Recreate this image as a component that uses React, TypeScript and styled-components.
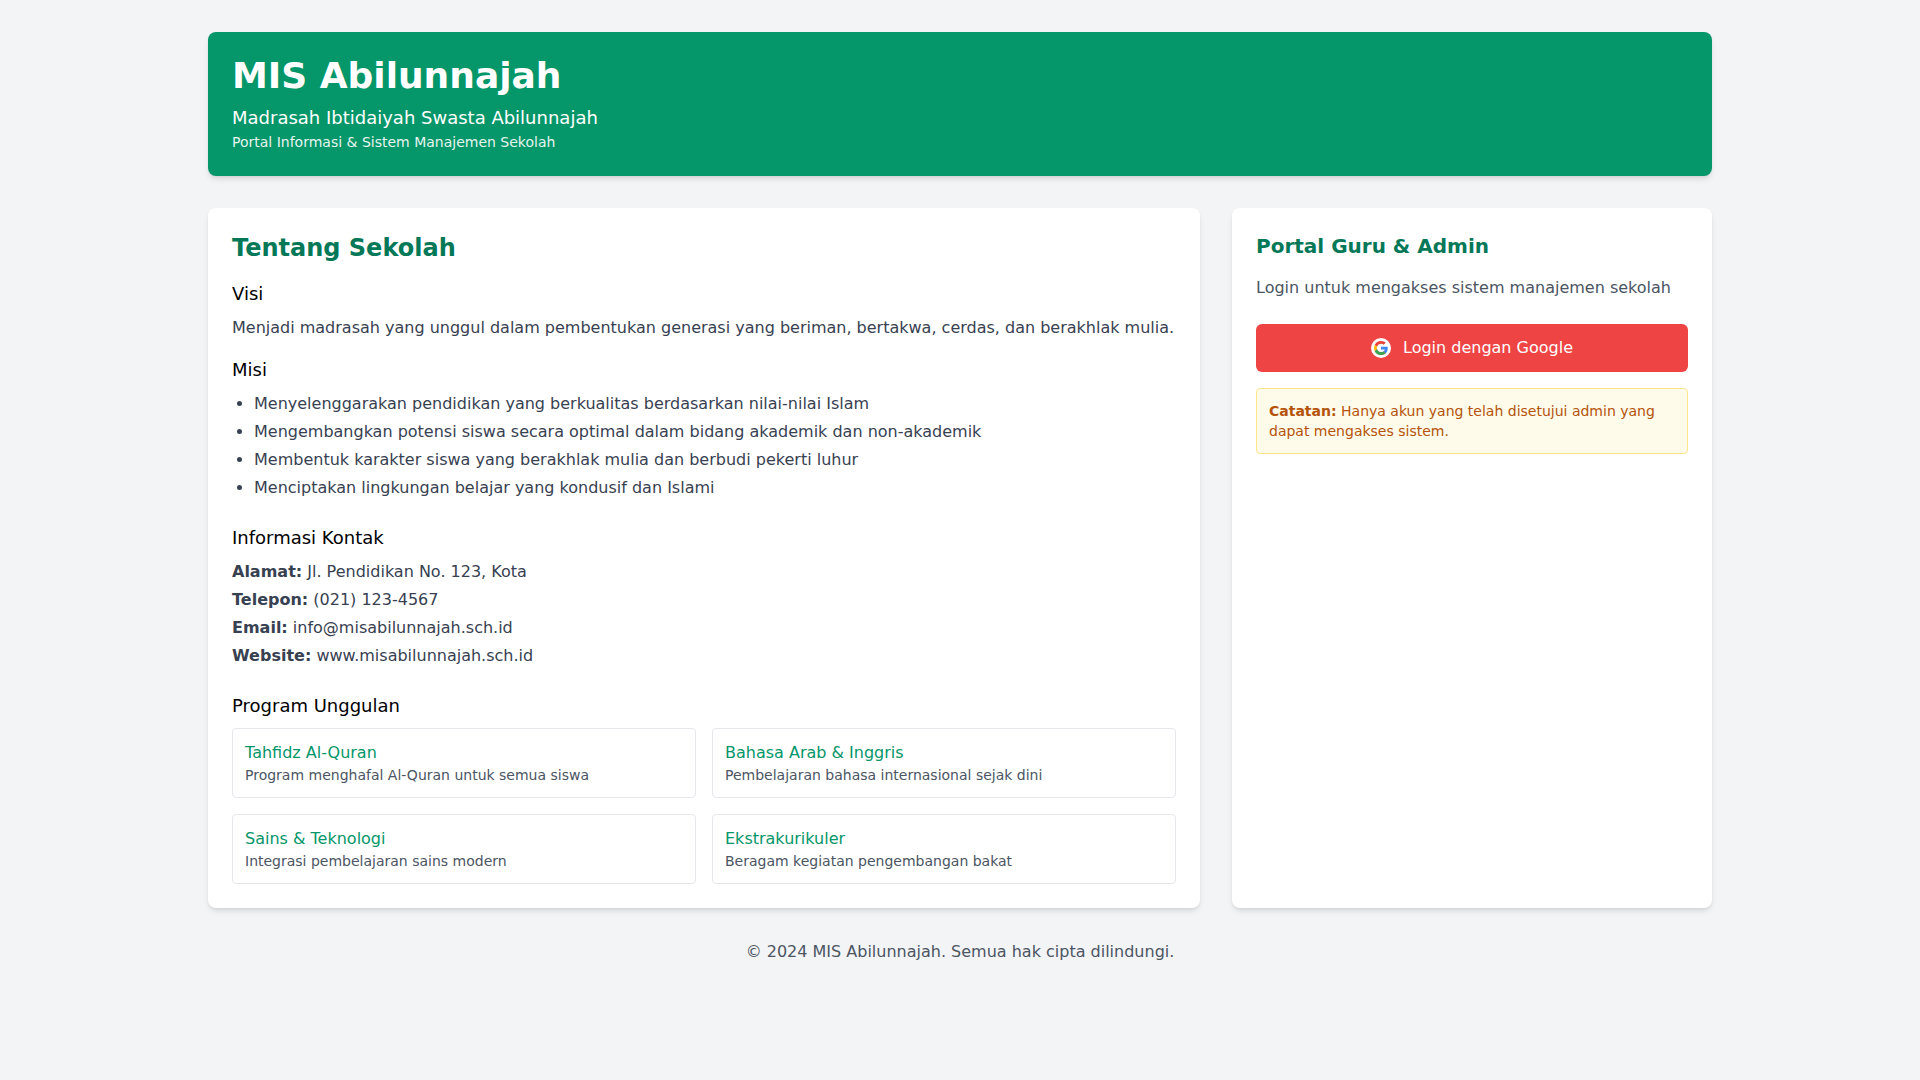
import React from "react";
import styled, { createGlobalStyle } from "styled-components";

const Global = createGlobalStyle`
  * { box-sizing: border-box; }
  html, body { margin: 0; padding: 0; }
  body {
    background: #f3f4f6;
    min-height: 100vh;
    font-family: "DejaVu Sans", sans-serif;
    font-size: 16px;
    line-height: 24px;
  }
`;

const Page = styled.div`
  width: 1536px;
  margin: 0 auto;
  padding: 32px 16px;
`;

const Header = styled.header`
  background: #059669;
  color: #fff;
  padding: 24px;
  border-radius: 8px;
  margin-bottom: 32px;
  box-shadow: 0 4px 6px -1px rgba(0, 0, 0, 0.1), 0 2px 4px -2px rgba(0, 0, 0, 0.1);
`;

const Title = styled.h1`
  margin: 0 0 8px;
  font-size: 36px;
  line-height: 40px;
  font-weight: 700;
`;

const Subtitle = styled.p`
  margin: 0;
  font-size: 18px;
  line-height: 28px;
`;

const Tagline = styled.p`
  margin: 0;
  font-size: 14px;
  line-height: 20px;
  opacity: 0.9;
`;

const Columns = styled.main`
  display: grid;
  grid-template-columns: repeat(3, minmax(0, 1fr));
  gap: 32px;
`;

const Card = styled.section<{ $span?: number }>`
  grid-column: span ${(p) => p.$span ?? 1};
  background: #fff;
  border-radius: 8px;
  padding: 24px;
  box-shadow: 0 4px 6px -1px rgba(0, 0, 0, 0.1), 0 2px 4px -2px rgba(0, 0, 0, 0.1);
`;

const SectionTitle = styled.h2`
  margin: 0 0 16px;
  font-size: 24px;
  line-height: 32px;
  font-weight: 700;
  color: #047857;
`;

const PortalTitle = styled.h2`
  margin: 0 0 16px;
  font-size: 20px;
  line-height: 28px;
  font-weight: 700;
  color: #047857;
`;

const Block = styled.div<{ $gap?: number }>`
  margin-bottom: ${(p) => p.$gap ?? 16}px;
  &:last-child { margin-bottom: 0; }
`;

const SubHeading = styled.h3`
  margin: 0 0 8px;
  font-size: 18px;
  line-height: 28px;
  font-weight: 500;
  color: #000;
`;

const Text = styled.p`
  margin: 0;
  color: #374151;
`;

const BulletList = styled.ul`
  margin: 0;
  padding: 0 0 0 22px;
  list-style: disc;
  color: #374151;
  display: flex;
  flex-direction: column;
  gap: 4px;
`;

const ContactList = styled.div`
  display: flex;
  flex-direction: column;
  gap: 4px;
  color: #374151;
`;

const ProgramGrid = styled.div`
  display: grid;
  grid-template-columns: repeat(2, minmax(0, 1fr));
  gap: 16px;
`;

const Program = styled.div`
  border: 1px solid #e5e7eb;
  border-radius: 4px;
  padding: 12px;
`;

const ProgramName = styled.h4`
  margin: 0;
  font-size: 16px;
  line-height: 24px;
  font-weight: 500;
  color: #059669;
`;

const ProgramDesc = styled.p`
  margin: 0;
  font-size: 14px;
  line-height: 20px;
  color: #4b5563;
`;

const PortalIntro = styled.p`
  margin: 0 0 24px;
  color: #4b5563;
`;

const GoogleButton = styled.button`
  width: 100%;
  height: 48px;
  display: flex;
  align-items: center;
  justify-content: center;
  gap: 12px;
  border: 0;
  border-radius: 6px;
  background: #ef4444;
  color: #fff;
  font: inherit;
  cursor: pointer;
`;

const Note = styled.div`
  margin-top: 16px;
  padding: 12px;
  background: #fffbeb;
  border: 1px solid #fde68a;
  border-radius: 4px;
  color: #b45309;
  font-size: 14px;
  line-height: 20px;
`;

const Footer = styled.footer`
  margin-top: 32px;
  text-align: center;
  color: #4b5563;
`;

const GoogleIcon = () => (
  <svg width="20" height="20" viewBox="0 0 20 20" aria-hidden="true">
    <circle cx="10" cy="10" r="10" fill="#fff" />
    <g transform="translate(3 3) scale(0.2917)">
      <path fill="#4285F4" d="M46.98 24.55c0-1.57-.15-3.09-.38-4.55H24v9.02h12.94c-.58 2.96-2.26 5.48-4.78 7.18l7.73 6c4.51-4.18 7.09-10.36 7.09-17.65z" />
      <path fill="#FBBC05" d="M10.53 28.59c-.48-1.45-.76-2.99-.76-4.59s.27-3.14.76-4.59l-7.98-6.19C.92 16.46 0 20.12 0 24c0 3.88.92 7.54 2.56 10.78l7.97-6.19z" />
      <path fill="#EA4335" d="M24 48c6.48 0 11.93-2.13 15.89-5.81l-7.73-6c-2.15 1.45-4.92 2.3-8.16 2.3-6.26 0-11.57-4.22-13.47-9.91l-7.98 6.19C6.51 42.62 14.62 48 24 48z" />
      <path fill="#34A853" d="M24 48c6.48 0 11.93-2.13 15.89-5.81l-7.73-6c-2.15 1.45-4.92 2.3-8.16 2.3-6.26 0-11.57-4.22-13.47-9.91l-7.98 6.19C6.51 42.62 14.62 48 24 48z" />
      <path fill="#EA4335" d="M24 9.5c3.54 0 6.71 1.22 9.21 3.6l6.85-6.85C35.9 2.38 30.47 0 24 0 14.62 0 6.51 5.38 2.56 13.22l7.98 6.19C12.43 13.72 17.74 9.5 24 9.5z" />
    </g>
  </svg>
);

const programs = [
  ["Tahfidz Al-Quran", "Program menghafal Al-Quran untuk semua siswa"],
  ["Bahasa Arab & Inggris", "Pembelajaran bahasa internasional sejak dini"],
  ["Sains & Teknologi", "Integrasi pembelajaran sains modern"],
  ["Ekstrakurikuler", "Beragam kegiatan pengembangan bakat"],
];

const missions = [
  "Menyelenggarakan pendidikan yang berkualitas berdasarkan nilai-nilai Islam",
  "Mengembangkan potensi siswa secara optimal dalam bidang akademik dan non-akademik",
  "Membentuk karakter siswa yang berakhlak mulia dan berbudi pekerti luhur",
  "Menciptakan lingkungan belajar yang kondusif dan Islami",
];

const contacts = [
  ["Alamat:", "Jl. Pendidikan No. 123, Kota"],
  ["Telepon:", "(021) 123-4567"],
  ["Email:", "info@misabilunnajah.sch.id"],
  ["Website:", "www.misabilunnajah.sch.id"],
];

export default function App() {
  return (
    <>
      <Global />
      <Page>
        <Header>
          <Title>MIS Abilunnajah</Title>
          <Subtitle>Madrasah Ibtidaiyah Swasta Abilunnajah</Subtitle>
          <Tagline>Portal Informasi &amp; Sistem Manajemen Sekolah</Tagline>
        </Header>
        <Columns>
          <Card $span={2}>
            <SectionTitle>Tentang Sekolah</SectionTitle>
            <Block>
              <SubHeading>Visi</SubHeading>
              <Text>Menjadi madrasah yang unggul dalam pembentukan generasi yang beriman, bertakwa, cerdas, dan berakhlak mulia.</Text>
            </Block>
            <Block $gap={24}>
              <SubHeading>Misi</SubHeading>
              <BulletList>
                {missions.map((m) => (
                  <li key={m}>{m}</li>
                ))}
              </BulletList>
            </Block>
            <Block $gap={24}>
              <SubHeading>Informasi Kontak</SubHeading>
              <ContactList>
                {contacts.map(([k, v]) => (
                  <div key={k}>
                    <strong>{k}</strong> {v}
                  </div>
                ))}
              </ContactList>
            </Block>
            <Block>
              <SubHeading>Program Unggulan</SubHeading>
              <ProgramGrid>
                {programs.map(([n, d]) => (
                  <Program key={n}>
                    <ProgramName>{n}</ProgramName>
                    <ProgramDesc>{d}</ProgramDesc>
                  </Program>
                ))}
              </ProgramGrid>
            </Block>
          </Card>
          <Card>
            <PortalTitle>Portal Guru &amp; Admin</PortalTitle>
            <PortalIntro>Login untuk mengakses sistem manajemen sekolah</PortalIntro>
            <GoogleButton>
              <GoogleIcon />
              Login dengan Google
            </GoogleButton>
            <Note>
              <strong>Catatan:</strong> Hanya akun yang telah disetujui admin yang dapat mengakses sistem.
            </Note>
          </Card>
        </Columns>
        <Footer>© 2024 MIS Abilunnajah. Semua hak cipta dilindungi.</Footer>
      </Page>
    </>
  );
}
